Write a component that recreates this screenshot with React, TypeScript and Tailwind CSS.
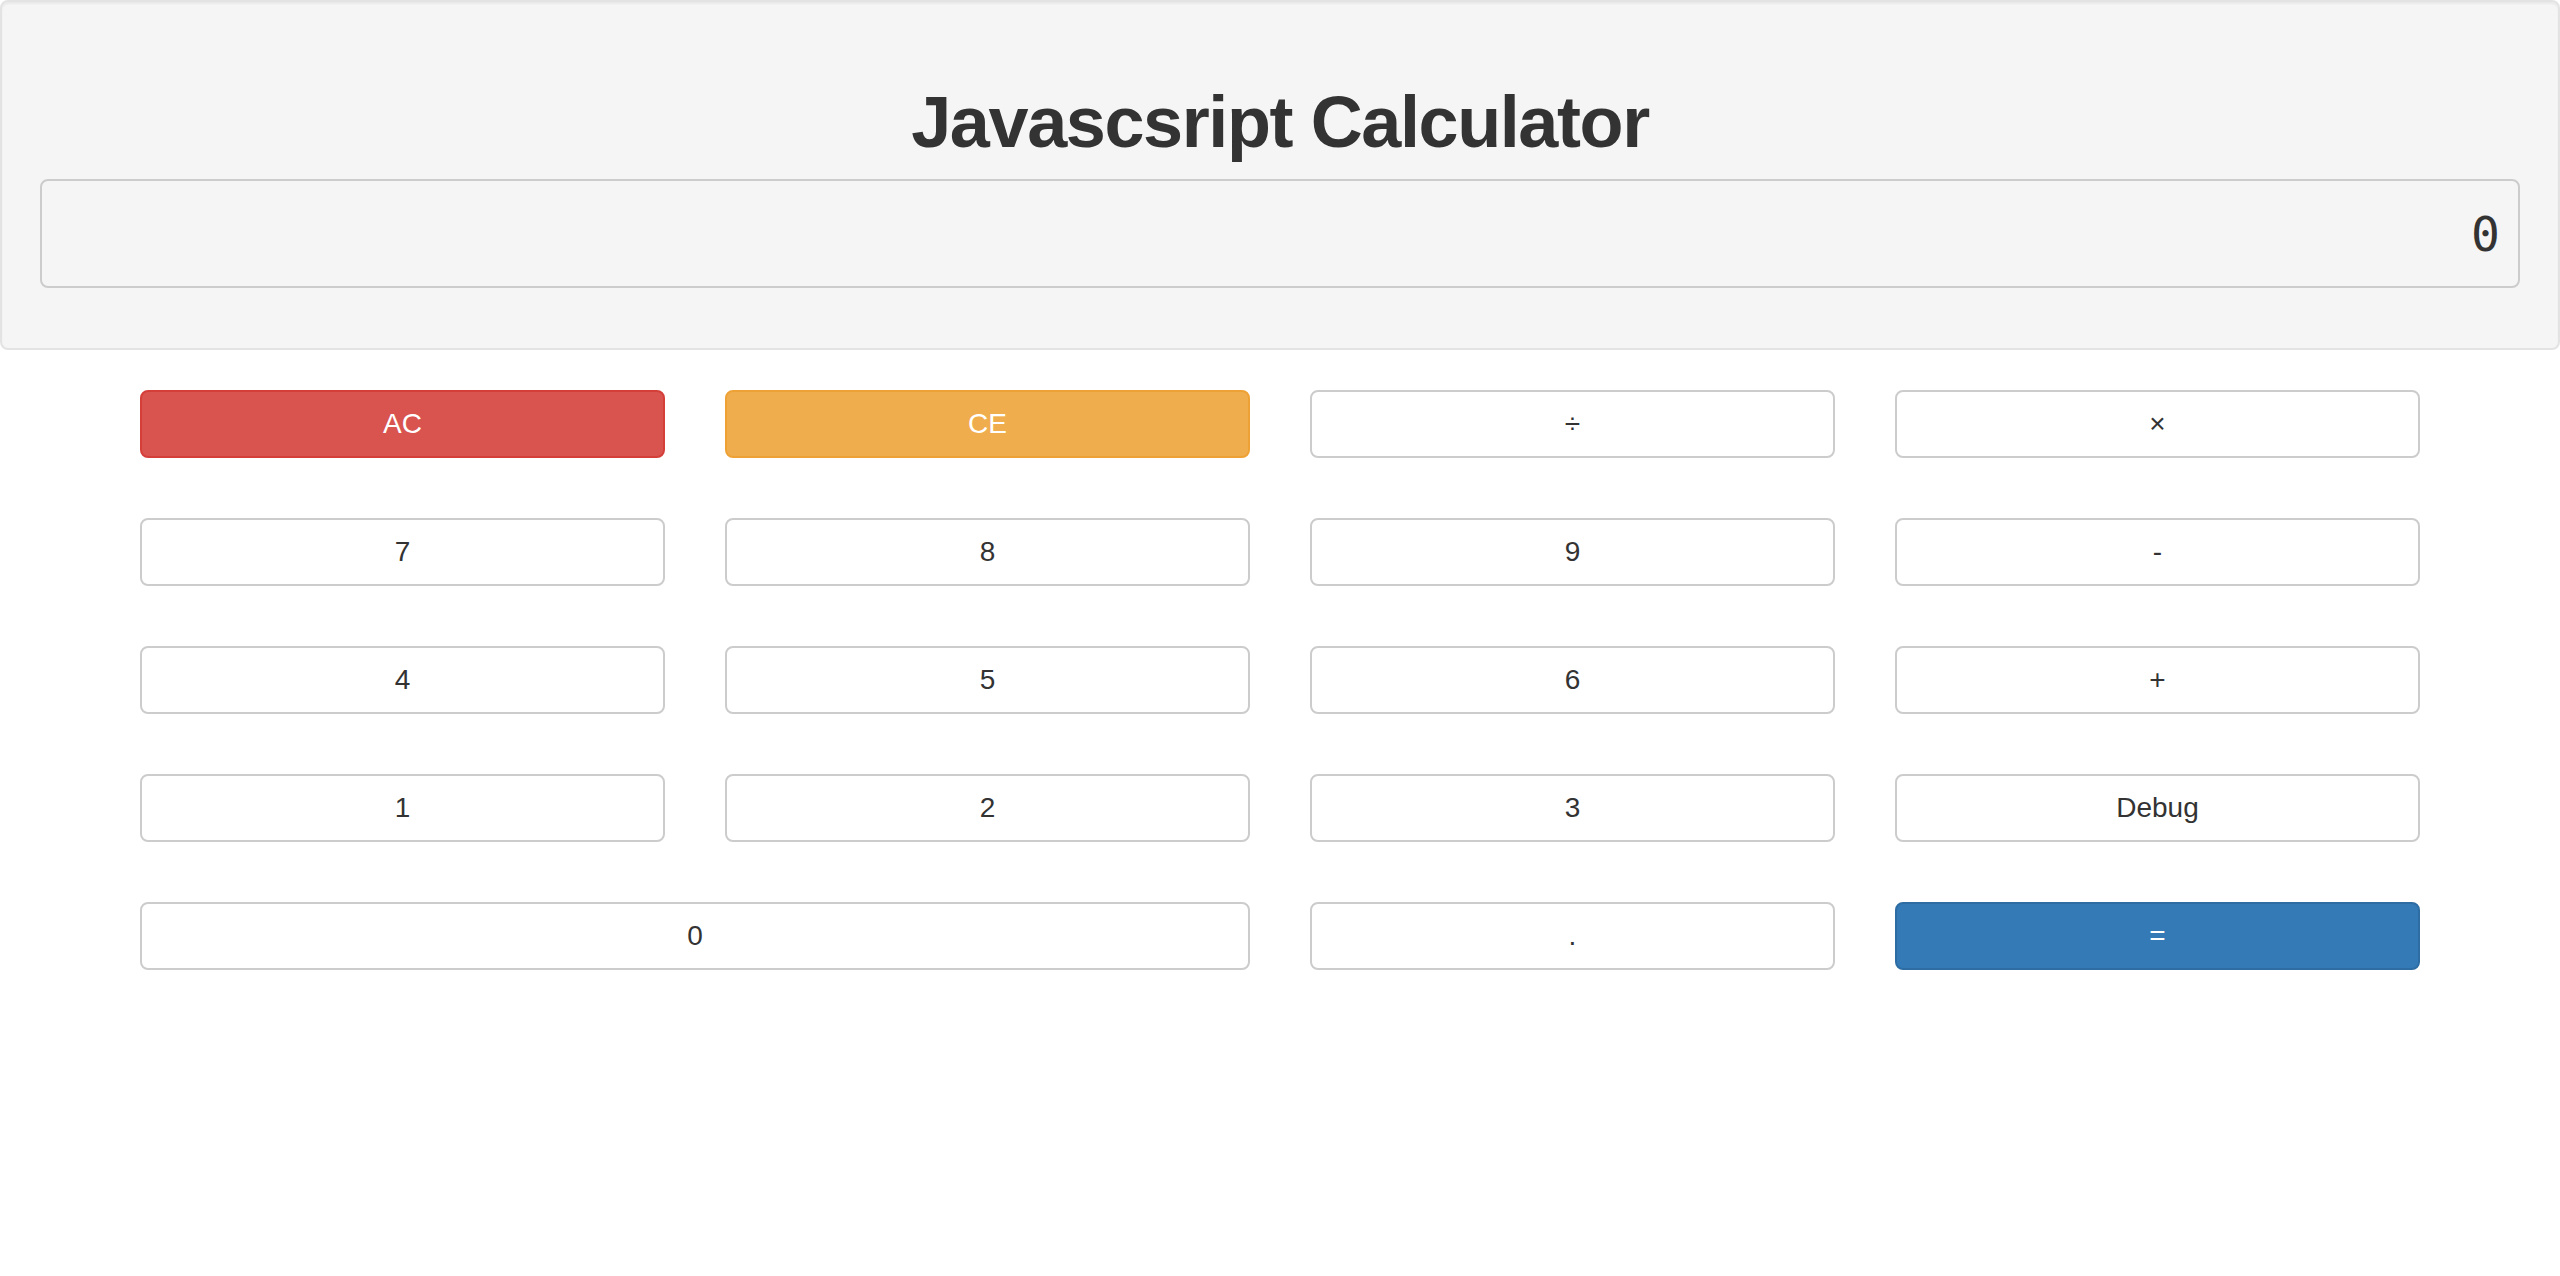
import React, { useState } from 'react';

type Key = { label: string; value: string; tone?: 'danger' | 'warning' | 'primary'; wide?: boolean };

const keys: Key[] = [
  { label: 'AC', value: 'AC', tone: 'danger' },
  { label: 'CE', value: 'CE', tone: 'warning' },
  { label: '÷', value: '/' },
  { label: '×', value: '*' },
  { label: '7', value: '7' },
  { label: '8', value: '8' },
  { label: '9', value: '9' },
  { label: '-', value: '-' },
  { label: '4', value: '4' },
  { label: '5', value: '5' },
  { label: '6', value: '6' },
  { label: '+', value: '+' },
  { label: '1', value: '1' },
  { label: '2', value: '2' },
  { label: '3', value: '3' },
  { label: 'Debug', value: 'debug' },
  { label: '0', value: '0', wide: true },
  { label: '.', value: '.' },
  { label: '=', value: '=', tone: 'primary' },
];

const toneClass = {
  danger: 'bg-[#d9534f] border-[#d43f3a] text-white',
  warning: 'bg-[#f0ad4e] border-[#eea236] text-white',
  primary: 'bg-[#337ab7] border-[#2e6da4] text-white',
  default: 'bg-white border-[#cccccc] text-[#333333]',
};

export default function App() {
  const [display, setDisplay] = useState('0');

  const press = (k: Key) => {
    if (k.value === 'AC' || k.value === 'CE') return setDisplay('0');
    if (k.value === 'debug') return;
    if (k.value === '=') {
      try {
        // eslint-disable-next-line no-new-func
        const r = Function(`return (${display})`)();
        setDisplay(String(r));
      } catch {
        setDisplay('0');
      }
      return;
    }
    setDisplay(d => (d === '0' && /[0-9]/.test(k.value) ? k.value : d + k.value));
  };

  return (
    <div className="min-h-[1276px] bg-white font-['Liberation_Sans',Arial,sans-serif] text-[#333333]">
      <div className="bg-[#f5f5f5] border-2 border-[#e3e3e3] rounded-lg shadow-[inset_0_2px_2px_rgba(0,0,0,0.05)] px-[38px] pt-[38px] pb-[60px] mb-[40px]">
        <h1 className="mt-[43px] mb-[17px] text-center text-[72px] leading-[79px] font-bold tracking-[-1.4px] text-[#333333]">
          Javascsript Calculator
        </h1>
        <div className="h-[109px] flex items-center justify-end px-[18px] bg-[#f5f5f5] border-2 border-[#cccccc] rounded-lg font-['DejaVu_Sans_Mono',monospace] text-[48px] text-[#333333]">
          {display}
        </div>
      </div>

      <div className="w-[2280px] mx-auto grid grid-cols-4 gap-x-[60px] gap-y-[60px]">
        {keys.map(k => (
          <button
            key={k.label}
            onClick={() => press(k)}
            className={`${k.wide ? 'col-span-2' : ''} h-[68px] border-2 rounded-lg text-[28px] leading-[40px] ${toneClass[k.tone ?? 'default']}`}
          >
            {k.label}
          </button>
        ))}
      </div>
    </div>
  );
}
